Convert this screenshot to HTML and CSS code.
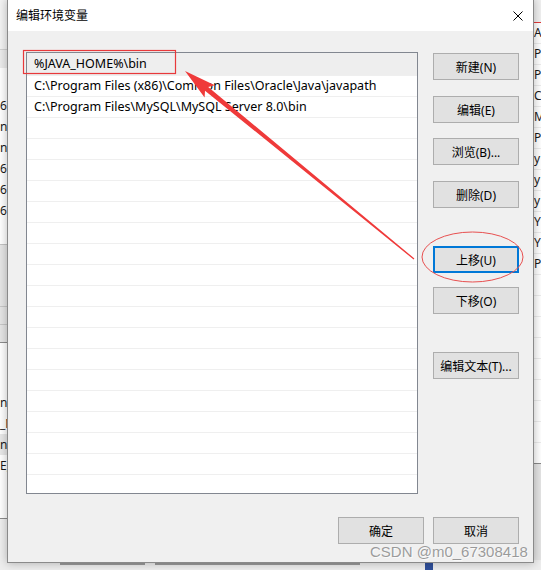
FILE: index.html
```html
<!DOCTYPE html>
<html lang="zh-CN">
<head>
<meta charset="utf-8">
<title>编辑环境变量</title>
<link rel="stylesheet" href="styles.css">
</head>
<body>
<div class="desk">
  <div class="bgwin bg-left">
    <div class="bl-top"></div>
    <div class="bl-head"></div>
    <div class="bl-rows">
      <div class="bl-row">6</div>
      <div class="bl-row">n</div>
      <div class="bl-row">n</div>
      <div class="bl-row">6</div>
      <div class="bl-row">6</div>
      <div class="bl-row">6</div>
    </div>
    <div class="bl-gray">
      <div class="bl-gline"></div>
      <div class="bl-gline"></div>
    </div>
    <div class="bl-rows2">
      <div class="bl-row">n</div>
      <div class="bl-row">_N</div>
      <div class="bl-row bl-hl">n</div>
      <div class="bl-row">E;</div>
    </div>
    <div class="bl-foot"></div>
  </div>

  <div class="bgwin bg-right">
    <div class="br-top"></div>
    <div class="br-rows">
      <div class="br-row">A</div>
      <div class="br-row">P</div>
      <div class="br-row">P</div>
      <div class="br-row">CA</div>
      <div class="br-row">M</div>
      <div class="br-row">P</div>
      <div class="br-row">y</div>
      <div class="br-row">y</div>
      <div class="br-row">y</div>
      <div class="br-row">Y</div>
      <div class="br-row">Y</div>
      <div class="br-row">P</div>
      <div class="br-row"></div>
      <div class="br-row"></div>
      <div class="br-row"></div>
      <div class="br-row"></div>
      <div class="br-row"></div>
      <div class="br-row"></div>
      <div class="br-row"></div>
      <div class="br-row"></div>
    </div>
    <div class="br-foot"></div>
  </div>

  <div class="bgwin bg-bottom">
    <div class="bb-bar bb-a"></div>
    <div class="bb-bar bb-b"></div>
    <div class="bb-blue"></div>
  </div>

  <div class="dialog">
    <div class="titlebar">
      <span class="title">编辑环境变量</span>
      <svg class="close" width="10" height="10" viewBox="0 0 10 10">
        <path d="M0.5 0.5 L9.5 9.5 M9.5 0.5 L0.5 9.5" stroke="#000" stroke-width="1" fill="none"/>
      </svg>
    </div>
    <div class="body">
      <div class="main">
        <div class="list">
          <div class="row sel">%JAVA_HOME%\bin</div>
          <div class="row">C:\Program Files (x86)\Common Files\Oracle\Java\javapath</div>
          <div class="row">C:\Program Files\MySQL\MySQL Server 8.0\bin</div>
          <div class="row"></div><div class="row"></div><div class="row"></div>
          <div class="row"></div><div class="row"></div><div class="row"></div>
          <div class="row"></div><div class="row"></div><div class="row"></div>
          <div class="row"></div><div class="row"></div><div class="row"></div>
          <div class="row"></div><div class="row"></div><div class="row"></div>
          <div class="row"></div><div class="row"></div><div class="row"></div>
        </div>
        <div class="side">
          <div class="btn m1">新建(N)</div>
          <div class="btn m2">编辑(E)</div>
          <div class="btn m3">浏览(B)...</div>
          <div class="btn m4">删除(D)</div>
          <div class="btn focus m5">上移(U)</div>
          <div class="btn m6">下移(O)</div>
          <div class="btn m7">编辑文本(T)...</div>
        </div>
      </div>
      <div class="footer">
        <div class="btn">确定</div>
        <div class="btn">取消</div>
      </div>
    </div>
  </div>

  <svg class="annot" width="541" height="570" viewBox="0 0 541 570">
    <rect x="23.5" y="50.5" width="152" height="23" fill="none" stroke="#e8393b" stroke-width="1.2"/>
    <ellipse cx="472.5" cy="257" rx="50.5" ry="25" fill="none" stroke="#e85050" stroke-width="1"/>
    <polygon fill="#ef3a3a" points="414.4,258.5 208.2,86.9 214.8,85.2 185,71 204.6,97.5 205,90.7 413.6,259.5"/>
  </svg>

  <div class="watermark">CSDN @m0_67308418</div>
</div>
</body>
</html>
```

FILE: styles.css
```css
* { box-sizing: border-box; }

body {
  margin: 0;
  background: #ffffff;
  font-family: "Noto Sans", "Noto Sans CJK SC", sans-serif;
}

.desk {
  position: relative;
  width: 541px;
  height: 570px;
  overflow: hidden;
  background: #ffffff;
}

/* background windows (desktop) */
.bgwin { position: absolute; }

.bg-left {
  left: 0;
  top: 0;
  width: 30px;
  height: 570px;
  display: flex;
  flex-direction: column;
  font-size: 12px;
  color: #1a1a1a;
  background: #ffffff;
}
.bl-top { height: 50px; background: #f3f3f3; border-bottom: 1px solid #d2d2d2; flex: none; }
.bl-head { height: 18px; background: #ececec; flex: none; }
.bl-rows { height: 176px; padding-top: 27px; background: #fff; flex: none; }
.bl-row { height: 21px; line-height: 21px; padding-left: 0; }
.bl-hl { background: #e8e8e8; }
.bl-gray {
  height: 99px;
  background: #e6e6e6;
  border-top: 1px solid #c4c4c4;
  border-bottom: 1px solid #8c8c8c;
  padding-top: 61px;
  flex: none;
}
.bl-gline { height: 18px; border-top: 1px solid #c8c8c8; }
.bl-rows2 { height: 175px; padding-top: 49px; background: #fff; flex: none; }
.bl-foot { flex: 1; background: #efefef; border-top: 1px solid #8c8c8c; }

.bg-right {
  left: 520px;
  top: 0;
  width: 21px;
  height: 570px;
  display: flex;
  flex-direction: column;
  font-size: 12px;
  color: #1a1a1a;
  overflow: hidden;
}
.br-top { height: 23px; background: #f0f0f0; border-bottom: 1px solid #e23a3a; flex: none; }
.br-rows { height: 440px; background: #fff; overflow: hidden; flex: none; }
.br-row {
  height: 21px;
  line-height: 20px;
  border-bottom: 1px solid #ececec;
  padding-left: 14px;
  white-space: nowrap;
  overflow: hidden;
}
.br-foot { flex: 1; background: #e4e4e4; border-top: 1px solid #888; }

.bg-bottom {
  left: 0;
  top: 560px;
  width: 541px;
  height: 10px;
  background: #ededed;
}
.bb-bar { position: absolute; top: 2px; height: 3px; background: #9a9a9a; }
.bb-a { left: 60px; width: 85px; }
.bb-b { left: 155px; width: 205px; }
.bb-blue { position: absolute; left: 425px; top: 2px; width: 8px; height: 8px; background: #2f4f9a; }

/* dialog */
.dialog {
  position: absolute;
  left: 7px;
  top: -1px;
  width: 527px;
  border: 1px solid #8a8a8a;
  background: #f0f0f0;
  box-shadow: 0 0 9px rgba(0, 0, 0, 0.28);
}

.titlebar {
  height: 31px;
  background: #ffffff;
  display: flex;
  align-items: center;
  padding-left: 8px;
  padding-right: 10px;
}
.title {
  font-size: 12px;
  color: #000;
  line-height: 16px;
}
.close { margin-left: auto; display: block; }

.body { padding: 21px 14px 18px 18px; }

.main { display: flex; gap: 15px; }

.list {
  width: 392px;
  height: 442px;
  border: 1px solid #828790;
  background: #ffffff;
  overflow: hidden;
  flex: none;
}
.row {
  height: 21px;
  line-height: 20px;
  border-bottom: 1px solid #efefef;
  padding-left: 7px;
  font-size: 12.5px;
  color: #000;
  white-space: nowrap;
}
.row.sel {
  height: 23px;
  line-height: 22px;
  background: #eeeeee;
}

.side {
  display: flex;
  flex-direction: column;
  width: 86px;
  flex: none;
}

.btn {
  width: 86px;
  height: 27px;
  background: #e1e1e1;
  border: 1px solid #adadad;
  display: flex;
  align-items: center;
  justify-content: center;
  font-size: 12px;
  color: #000;
  white-space: nowrap;
  flex: none;
}
.btn.focus { border: 2px solid #0078d7; }

.m1 { margin-top: 1px; }
.m2 { margin-top: 16px; }
.m3 { margin-top: 15px; }
.m4 { margin-top: 16px; }
.m5 { margin-top: 38px; }
.m6 { margin-top: 14px; }
.m7 { margin-top: 38px; }

.footer {
  display: flex;
  justify-content: flex-end;
  gap: 9px;
  margin-top: 23px;
}

/* annotations */
.annot {
  position: absolute;
  left: 0;
  top: 0;
  pointer-events: none;
}

.watermark {
  position: absolute;
  left: 370px;
  top: 543px;
  font-family: "Liberation Sans", Arial, sans-serif;
  font-size: 15px;
  line-height: 18px;
  color: rgba(125, 125, 125, 0.75);
  text-shadow: 1px 1px 0 rgba(255, 255, 255, 0.7);
  white-space: nowrap;
}
```
